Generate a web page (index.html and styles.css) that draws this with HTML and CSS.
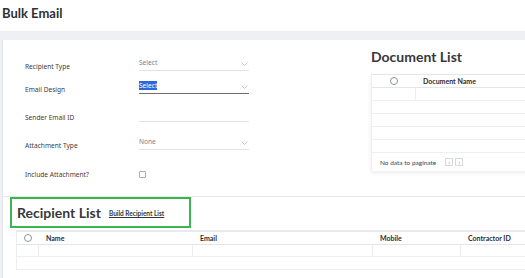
FILE: index.html
```html
<!DOCTYPE html>
<html lang="en">
<head>
    <meta charset="UTF-8">
    <title>Bulk Email</title>
    <link rel="stylesheet" href="styles.css">
</head>
<body>
    <div class="topbar">
        <h1>Bulk Email</h1>
    </div>
    <div class="page">
        <div class="card">
            <div class="top-section">
                <div class="form">
                    <div class="row">
                        <label>Recipient Type</label>
                        <div class="field select"><span class="value">Select</span>
                            <svg class="chev" width="7" height="4" viewBox="0 0 7 4"><polyline points="0.5,0.5 3.5,3.5 6.5,0.5" fill="none" stroke="#b5b9c0" stroke-width="0.8"/></svg>
                        </div>
                    </div>
                    <div class="row row-tight">
                        <label>Email Design</label>
                        <div class="field select focused"><span class="value picked">Select</span>
                            <svg class="chev" width="7" height="4" viewBox="0 0 7 4"><polyline points="0.5,0.5 3.5,3.5 6.5,0.5" fill="none" stroke="#b5b9c0" stroke-width="0.8"/></svg>
                        </div>
                    </div>
                    <div class="row">
                        <label>Sender Email ID</label>
                        <div class="field"></div>
                    </div>
                    <div class="row">
                        <label>Attachment Type</label>
                        <div class="field select"><span class="value">None</span>
                            <svg class="chev" width="7" height="4" viewBox="0 0 7 4"><polyline points="0.5,0.5 3.5,3.5 6.5,0.5" fill="none" stroke="#b5b9c0" stroke-width="0.8"/></svg>
                        </div>
                    </div>
                    <div class="row row-check">
                        <label>Include Attachment?</label>
                        <div class="check-wrap"><span class="checkbox"></span></div>
                    </div>
                </div>
                <div class="docs">
                    <h2>Document List</h2>
                    <div class="doc-table">
                        <div class="trow thead">
                            <div class="cell c-sel"><span class="radio"></span></div>
                            <div class="cell c-doc">Document Name</div>
                        </div>
                        <div class="trow">
                            <div class="cell c-sel"></div>
                            <div class="cell c-doc"></div>
                        </div>
                        <div class="trow"></div>
                        <div class="trow"></div>
                        <div class="trow"></div>
                        <div class="trow"></div>
                        <div class="pager">
                            <span>No data to paginate</span>
                            <span class="pbtns"><span class="pbtn">&lsaquo;</span><span class="pbtn">&rsaquo;</span></span>
                        </div>
                    </div>
                </div>
            </div>

            <div class="recipients">
                <div class="rec-head">
                    <h2>Recipient List</h2>
                    <a href="#" class="build-link">Build Recipient List</a>
                </div>
                <div class="rec-table">
                    <div class="trow thead">
                        <div class="cell r-sel"><span class="radio"></span></div>
                        <div class="cell r-name">Name</div>
                        <div class="cell r-email">Email</div>
                        <div class="cell r-mobile">Mobile</div>
                        <div class="cell r-cid">Contractor ID</div>
                    </div>
                    <div class="trow">
                        <div class="cell r-sel"></div>
                        <div class="cell r-name"></div>
                        <div class="cell r-email"></div>
                        <div class="cell r-mobile"></div>
                        <div class="cell r-cid"></div>
                    </div>
                    <div class="trow"></div>
                </div>
            </div>
        </div>
    </div>
</body>
</html>
```
FILE: styles.css
```css
* {
    margin: 0;
    padding: 0;
    box-sizing: border-box;
}
html, body {
    overflow: hidden;
    width: 525px;
    height: 278px;
}
body {
    background: #fff;
    font-family: "Noto Sans", "Open Sans", sans-serif;
    color: #444;
}
.topbar {
    height: 31px;
    padding: 5px 0 0 2px;
}
.topbar h1 {
    font-family: Lato, sans-serif;
    font-size: 13px;
    font-weight: 700;
    color: #2f2f33;
    line-height: 16px;
}
.page {
    background: #eef0f3;
    padding: 9px 0 0 2px;
    width: 800px;
}
.card {
    background: #fff;
    border-left: 1px solid #e2e5e9;
    height: 240px;
}

/* top form + document list */
.top-section {
    display: flex;
    height: 157px;
    border-bottom: 1px solid #e6e8eb;
}
.form {
    width: 368px;
    flex: none;
    padding: 17px 0 0 22px;
}
.row {
    display: flex;
    align-items: flex-end;
    height: 14px;
    margin-top: 14px;
}
.row:first-child { margin-top: 0; }
.row.row-tight { margin-top: 9px; }
.row.row-check {
    align-items: center;
    margin-top: 17px;
}
.row label {
    width: 114px;
    font-size: 6.6px;
    color: #3d3d40;
    line-height: 9px;
}
.field {
    width: 110px;
    height: 14px;
    border-bottom: 1px solid #dfe2e6;
    position: relative;
    display: flex;
    align-items: flex-start;
}
.field.focused {
    border-bottom: 1.5px solid #6b6e73;
}
.value {
    font-size: 6.6px;
    color: #7a7f88;
    line-height: 9px;
    display: block;
    margin-top: 1px;
}
.value.picked {
    background: #2f67d8;
    color: #fff;
}
.chev {
    position: absolute;
    right: 1px;
    top: 5px;
}
.check-wrap {
    width: 110px;
}
.checkbox {
    display: block;
    width: 7px;
    height: 7px;
    border: 1px solid #a9acb2;
    border-radius: 1px;
}

.docs {
    padding-top: 8px;
}
.docs h2, .rec-head h2 {
    font-family: Lato, sans-serif;
    font-size: 14px;
    font-weight: 700;
    color: #38383c;
    line-height: 18px;
}
.doc-table {
    margin-top: 8px;
    width: 220px;
    border-top: 1px solid #e4e6e9;
    border-left: 1px solid #eceef0;
    box-shadow: 0 2px 4px rgba(0,0,0,0.08);
}
.trow {
    display: flex;
    height: 13px;
    border-bottom: 1px solid #eceef1;
}
.thead {
    height: 13px;
    border-bottom: 1px solid #e3e5e8;
}
.cell {
    font-family: Lato, sans-serif;
    font-size: 7px;
    font-weight: 700;
    color: #2c2c30;
    line-height: 12px;
    padding-left: 8px;
    border-left: 1px solid #eceef1;
    height: 100%;
}
.thead .cell { border-left: none; }
.cell:first-child { border-left: none; }
.c-sel {
    width: 43px;
    display: flex;
    align-items: center;
    justify-content: center;
    padding-left: 0;
}
.c-doc { flex: 1; }
.radio {
    display: block;
    width: 8px;
    height: 8px;
    border: 1px solid #8f939a;
    border-radius: 50%;
}
.pager {
    height: 18px;
    display: flex;
    align-items: center;
    padding-left: 8px;
    font-family: Lato, sans-serif;
    font-size: 6.5px;
    color: #3f4350;
}
.pbtns {
    margin-left: 9px;
    display: flex;
    gap: 2px;
}
.pbtn {
    width: 8px;
    height: 8px;
    border: 1px solid #d6d9de;
    color: #9a9ea5;
    font-size: 7px;
    line-height: 6px;
    text-align: center;
}

/* recipient list */
.rec-head {
    display: flex;
    align-items: center;
    width: 181px;
    height: 31px;
    margin-left: 7px;
    border: 2px solid #3db54f;
    padding-left: 5px;
}
.build-link {
    margin-left: 8px;
    font-family: Lato, sans-serif;
    font-size: 6.5px;
    font-weight: 700;
    color: #35373d;
    text-decoration: underline;
    margin-top: 2px;
}
.rec-table {
    margin: 2px 0 0 13px;
    border-top: 2px solid #e8eaed;
    border-left: 1px solid #eceef1;
    width: 700px;
}
.rec-table .trow { height: 12.5px; }
.r-sel {
    width: 21px;
    display: flex;
    align-items: center;
    justify-content: center;
    padding-left: 0;
}
.r-name { width: 154px; }
.r-email { width: 180px; }
.r-mobile { width: 88px; }
.r-cid { flex: 1; }
```
